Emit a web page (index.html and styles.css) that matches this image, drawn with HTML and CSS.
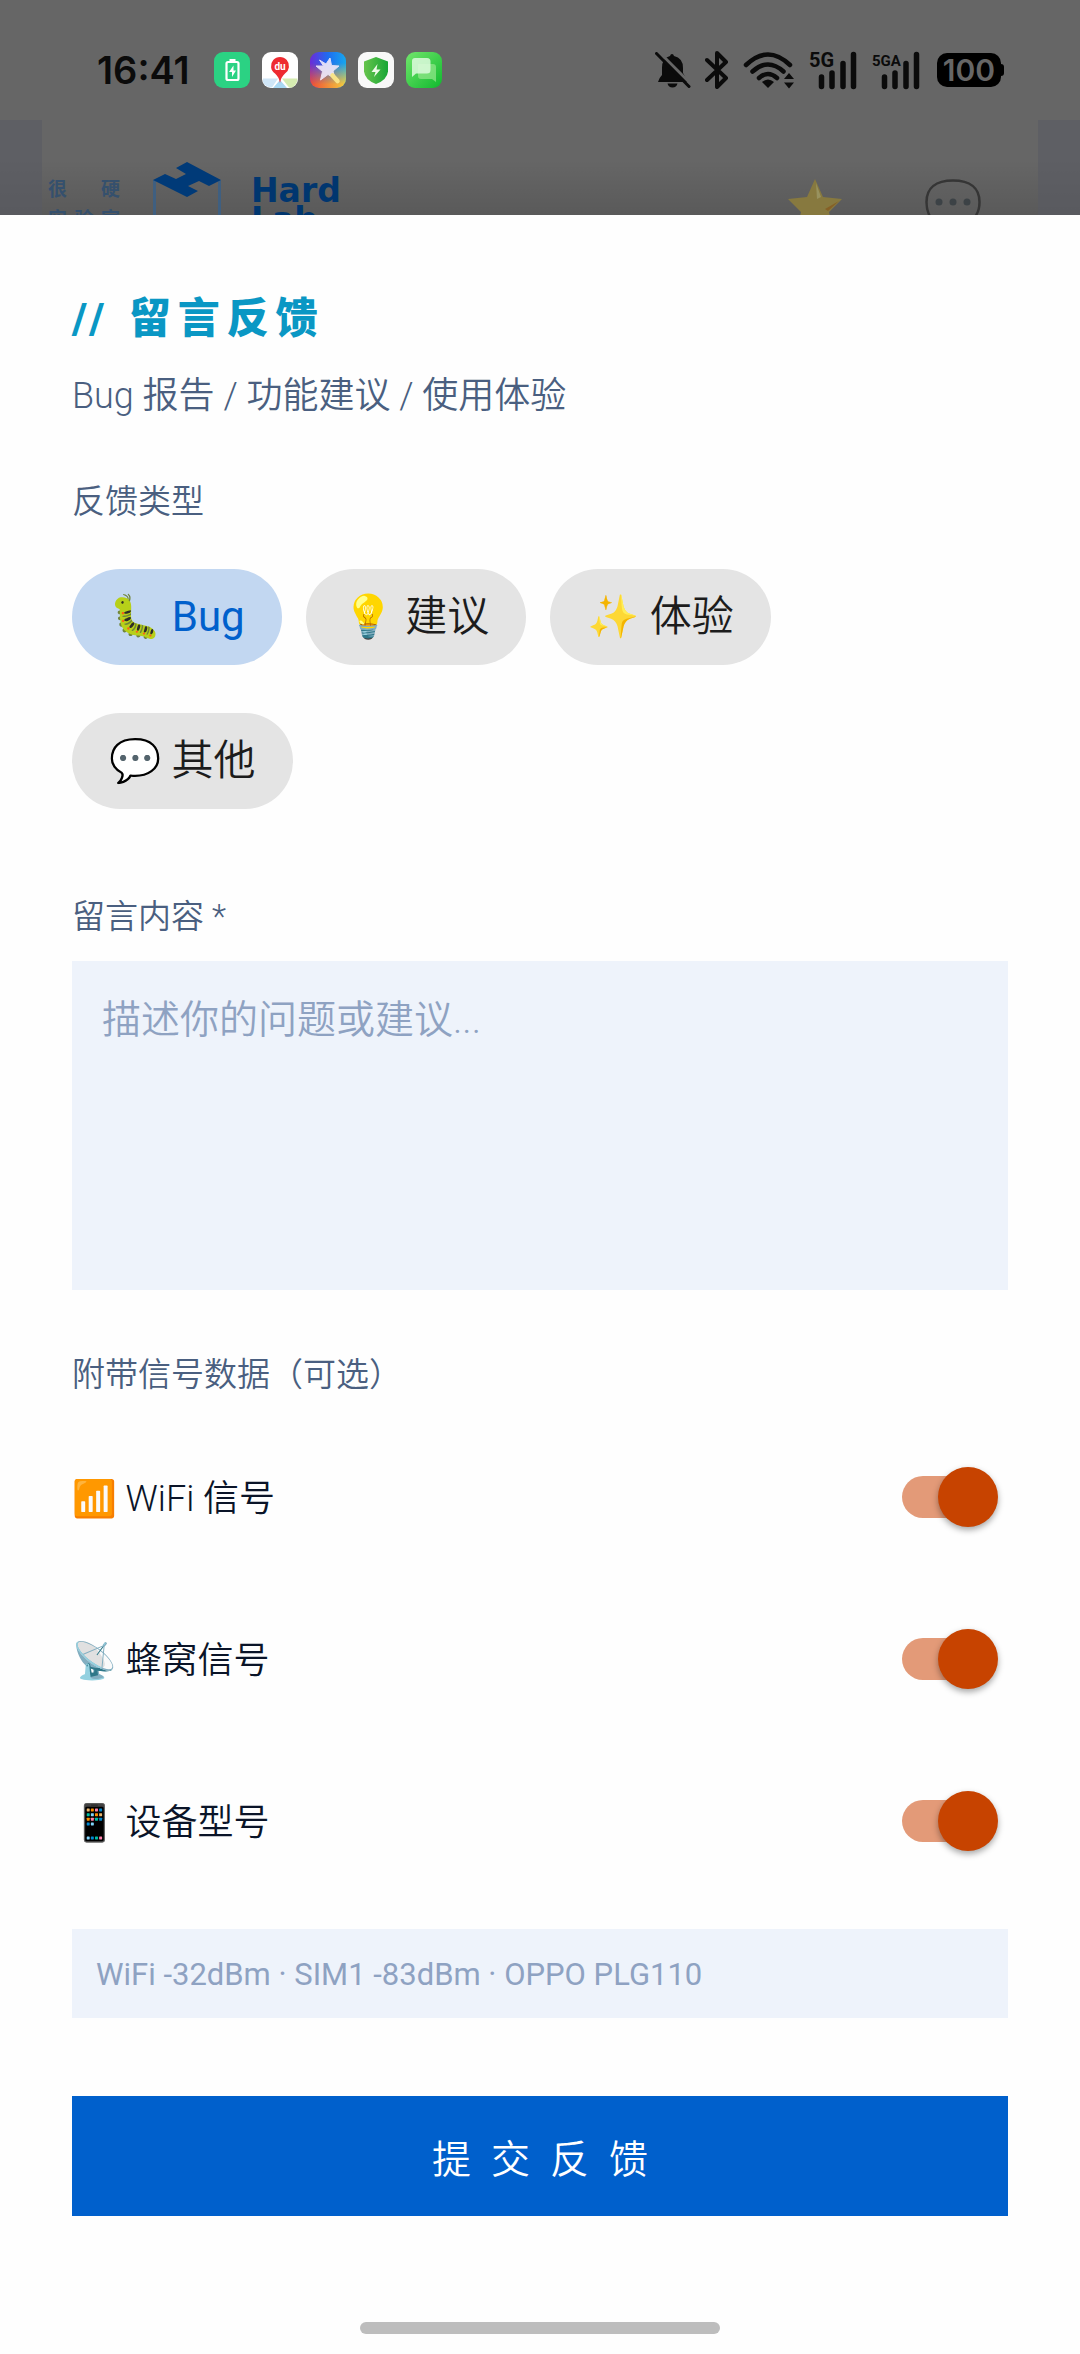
FILE: index.html
```html
<!DOCTYPE html>
<html lang="zh-CN">
<head>
<meta charset="utf-8">
<meta name="viewport" content="width=device-width, initial-scale=1">
<title>留言反馈</title>
<link rel="stylesheet" href="styles.css">
</head>
<body>
<div class="screen">
  <div class="backdrop">
    <div class="status">
      <div class="status-left">
        <span class="clock">16:41</span>
        <svg class="app" viewBox="0 0 36 36"><rect width="36" height="36" rx="9" fill="#2bd283"/><rect x="12.5" y="10" width="12" height="18" rx="1.5" fill="none" stroke="#fff" stroke-width="2.2"/><rect x="15.500" y="7" width="6" height="3" fill="#fff"/><path d="M19.500 13.500l-4.500 6.500h3v5l4-6.500h-2.500z" fill="#fff"/></svg>
        <svg class="app" viewBox="0 0 36 36"><rect width="36" height="36" rx="9" fill="#fff"/><path d="M1 26.500h15L10 35.500Q3 35 1 30z" fill="#cfe6f7"/><path d="M18 28l-7 8h14z" fill="#a9d8f3"/><path d="M20 26.500h15.500Q35 33 30 35.500h-3z" fill="#d5ebb0"/><path d="M18 31q-1-6-5-9.500a9 9 0 1 1 10 0Q19 25 18 31z" fill="#ee2b31"/><text x="18" y="18" text-anchor="middle" class="pin-text">du</text></svg>
        <svg class="app" viewBox="0 0 36 36"><defs><linearGradient id="sky" x1="0" y1="0" x2="1" y2="0"><stop offset="0" stop-color="#6b2bd8"/><stop offset=".5" stop-color="#1f6df0"/><stop offset="1" stop-color="#16a7ee"/></linearGradient><linearGradient id="sun" x1="0" y1="1" x2="1" y2=".9"><stop offset="0" stop-color="#ec4a36"/><stop offset="1" stop-color="#f3cf3e"/></linearGradient><linearGradient id="fade" x1="0" y1="0" x2="0" y2="1"><stop offset=".3" stop-color="#000"/><stop offset=".9" stop-color="#fff"/></linearGradient><mask id="low"><rect width="36" height="36" fill="url(#fade)"/></mask></defs><rect width="36" height="36" rx="9" fill="url(#sky)"/><rect width="36" height="36" rx="9" fill="url(#sun)" mask="url(#low)"/><path d="M20 6l1.500 7.500 7.500.5-6 5 2 7.500-7-4-7.500 5.500 2-8.500L6 14h7.500l-4-6 6.500 4z" fill="#f1e9fa" stroke="#f1e9fa" stroke-linejoin="round" opacity=".9"/><path d="M22.500 23.500l5 5.500" stroke="#f8e489" stroke-width="4.500" stroke-linecap="round"/></svg>
        <svg class="app" viewBox="0 0 36 36"><defs><linearGradient id="shield"><stop offset="0" stop-color="#67c44c"/><stop offset="1" stop-color="#17a635"/></linearGradient></defs><rect width="36" height="36" rx="9" fill="#f8f8f8"/><path d="M18 5l12 4.500v10Q29 28 18 32 7 28 6 19.500v-10z" fill="url(#shield)"/><path d="M19.500 12l-6 8h4l-1.500 5 6.500-7.500h-4z" fill="#eefbe8"/></svg>
        <svg class="app" viewBox="0 0 36 36"><defs><linearGradient id="chat" x1="0" y1="0" x2="1" y2="1"><stop offset="0" stop-color="#72e66c"/><stop offset="1" stop-color="#10b92e"/></linearGradient></defs><rect width="36" height="36" rx="9" fill="url(#chat)"/><path d="M12 12h15q3 0 3 3v15l-4-3H15q-3 0-3-3z" fill="#8fe588" opacity=".75"/><path d="M9 6h12q3.500 0 3.500 3.500v8.500q0 3.500-3.500 3.500H10l-4 3.500V9q0-3 3-3z" fill="#defade" opacity=".85"/></svg>
      </div>
      <div class="status-right">
        <svg class="bell" viewBox="0 0 36 36"><path d="M17 2q1.500 0 2 2 9 2 9 12v5l5 9H3q1-4 4-7v-7q0-10 8-12 .5-2 2-2z" fill="#0b0b0b"/><path d="M12.500 31.500h10q-1 4-5 4t-5-4z" fill="#0b0b0b"/><path d="M3-1L37 33" stroke="#666" stroke-width="3"/><path d="M1.500 1.500L34 34.500" stroke="#0b0b0b" stroke-width="3" stroke-linecap="round"/></svg>
        <svg class="bt" viewBox="0 0 24 38"><path d="M2 9l19 18-9 9V2l9 9L2 29" fill="none" stroke="#0b0b0b" stroke-width="4" stroke-linejoin="round" stroke-linecap="round"/></svg>
        <svg class="wifi" viewBox="0 0 52 38"><g fill="none" stroke="#0b0b0b" stroke-width="4.500" stroke-linecap="round"><path d="M3 14q22-21 44 0"/><path d="M9.500 20.500q15.500-14 31 0"/><path d="M16 27q9-8 18 0"/></g><path d="M19 31q6-5 12 0l-6 6z" fill="#0b0b0b"/><path d="M41 28l5-6 5 6zM41 31.500l5 6 5-6z" fill="#0b0b0b"/></svg>
        <svg class="signal" viewBox="0 0 49 38"><text x="0" y="16" class="net">5G</text><path d="M12.500 26v9.500M23 22v13.500M34 12.500v23M44.500 3.500v32" stroke="#0b0b0b" stroke-width="5.500" stroke-linecap="round"/></svg>
        <svg class="signal" viewBox="0 0 49 38"><text x="0" y="15" class="net net-small">5GA</text><path d="M12.500 26v9.500M23 22v13.500M34 12.500v23M44.500 3.500v32" stroke="#0b0b0b" stroke-width="5.500" stroke-linecap="round"/></svg>
        <span class="battery">100</span>
      </div>
    </div>
    <div class="app-header">
      <div class="brand">
        <div class="brand-cn"><div><span>很</span><span>硬</span></div><div><span>实</span><span>验</span><span>室</span></div></div>
        <svg class="cube" viewBox="0 0 68 80"><path d="M1.500 18v60M66.500 18v60" stroke="#3f5f80" stroke-width="3"/><path d="M34 0L68 18 56 24 46 19 35 24 45 29 34 35 0 18 12 12 23 17 33 12 23 6z" fill="#003a78"/></svg>
        <div class="brand-en">Hard<br>Lab</div>
      </div>
      <div class="header-actions">
        <svg class="star" viewBox="0 0 54 52"><path d="M27 0l8 18 19 2-13 13 4 19-18-9-18 9 4-19L0 20l19-2z" fill="#87793f"/><path d="M28 4l5 14-4 2z" fill="#98925f"/><path d="M37 30l14-8-11 10z" fill="#866025"/></svg>
        <svg class="bubble" viewBox="0 0 56 56"><path d="M28 1.500C11 1.500 1.500 9 1.500 23S9 44 14 45q0 5-4 9 8-2 12-8h6c18 0 26.500-9 26.500-23S45 1.500 28 1.500z" fill="none" stroke="#353535" stroke-width="2.500"/><g fill="#3c4246"><circle cx="14" cy="23" r="3.500"/><circle cx="28" cy="23" r="3.500"/><circle cx="42" cy="23" r="3.500"/></g></svg>
      </div>
    </div>
  </div>

  <form class="sheet">
    <h1>// 留言反馈</h1>
    <p class="subtitle">Bug 报告 / 功能建议 / 使用体验</p>

    <fieldset class="types">
      <legend class="label">反馈类型</legend>
      <div class="chips">
        <label class="chip"><input type="radio" name="type" checked>🐛 Bug</label>
        <label class="chip"><input type="radio" name="type">💡 建议</label>
        <label class="chip"><input type="radio" name="type">✨ 体验</label>
        <label class="chip"><input type="radio" name="type">💬 其他</label>
      </div>
    </fieldset>

    <label class="label message-label" for="message">留言内容 *</label>
    <textarea id="message" placeholder="描述你的问题或建议..."></textarea>

    <fieldset class="signals">
      <legend class="label">附带信号数据（可选）</legend>
      <div class="rows">
        <label class="row"><span>📶 WiFi 信号</span><input type="checkbox" class="switch" checked></label>
        <label class="row"><span>📡 蜂窝信号</span><input type="checkbox" class="switch" checked></label>
        <label class="row"><span>📱 设备型号</span><input type="checkbox" class="switch" checked></label>
      </div>
    </fieldset>

    <p class="summary">WiFi -32dBm · SIM1 -83dBm · OPPO PLG110</p>
    <button type="button" class="submit">提交反馈</button>
    <div class="home-bar"></div>
  </form>
</div>
</body>
</html>
```
FILE: styles.css
```css
* { box-sizing: border-box; }

body {
  margin: 0;
  background: #fefefe;
  color: #0a1428;
  font-family: Roboto, "Noto Sans CJK SC", "Noto Color Emoji", sans-serif;
  font-weight: 350;
}

h1, p, fieldset, legend { margin: 0; padding: 0; border: 0; }

.screen {
  min-height: 100vh;
  display: flex;
  flex-direction: column;
}

/* Dimmed app behind the sheet */
.backdrop {
  height: 215px;
  overflow: hidden;
  background: linear-gradient(transparent 160px, rgba(0, 0, 0, .12)) #666;
}

.status {
  height: 120px;
  padding: 20px 79px 0 97px;
  display: flex;
  align-items: center;
  justify-content: space-between;
}

.status-left { display: flex; align-items: center; gap: 12px; }

.clock {
  margin-right: 12px;
  color: #0b0b0b;
  font: 600 38px/44px Inter, sans-serif;
}

.app { width: 36px; height: 36px; }
.pin-text { font: 700 10px Roboto, sans-serif; fill: #fff; }

.status-right { display: flex; align-items: center; gap: 14px; }
.bell { width: 36px; height: 36px; }
.bt { width: 24px; height: 38px; }
.wifi { width: 52px; height: 38px; }
.signal { width: 49px; height: 38px; overflow: visible; }
.net { font: 700 20px Roboto, sans-serif; fill: #0b0b0b; }
.net-small { font-size: 15px; }

.battery {
  position: relative;
  width: 64px;
  margin-left: 2px;
  border-radius: 10px;
  background: #000;
  color: #666;
  font: 600 30px/34px Inter, sans-serif;
  text-align: center;
}

.battery::after {
  content: "";
  position: absolute;
  left: 100%;
  top: 11px;
  width: 3px;
  height: 12px;
  border-radius: 0 3px 3px 0;
  background: #000;
}

.app-header {
  height: 160px;
  padding: 42px 57px 0 6px;
  border: solid rgba(88, 90, 98, .6);
  border-width: 0 42px;
  display: flex;
  align-items: flex-start;
  justify-content: space-between;
}

.brand { display: flex; align-items: flex-start; }

.brand-cn {
  width: 72px;
  margin: 11px 33px 0 0;
  color: #35506d;
  font: 700 19px/30px "Noto Sans CJK SC", sans-serif;
}

.brand-cn div { display: flex; justify-content: space-between; }
.cube { width: 68px; height: 80px; margin-right: 30px; }

.brand-en {
  margin-top: 14px;
  color: #00366f;
  font: 700 33px/29px "DejaVu Sans", sans-serif;
}

.header-actions { display: flex; gap: 83px; padding-top: 17px; }
.star { width: 54px; height: 52px; }
.bubble { width: 56px; height: 56px; }

/* Feedback sheet */
.sheet {
  flex: 1;
  padding: 80px 72px 20px;
  display: flex;
  flex-direction: column;
  background: #fefefe;
}

h1 {
  color: #0a97c4;
  font-size: 42px;
  font-weight: 800;
  line-height: 48px;
  letter-spacing: 7px;
}

.subtitle {
  margin-top: 29px;
  color: #4a5f80;
  font-size: 36px;
  line-height: 48px;
}

.label {
  display: block;
  color: #4a5f80;
  font-size: 33px;
  line-height: 48px;
}

.types { margin-top: 58px; }
.chips { margin-top: 43px; display: flex; flex-wrap: wrap; gap: 48px 24px; max-width: 840px; }

.chip {
  position: relative;
  padding: 0 37px;
  border-radius: 48px;
  background: #e4e4e4;
  color: #1c1c1c;
  font-size: 42px;
  line-height: 96px;
  white-space: nowrap;
}

.chip input { position: absolute; opacity: 0; }
.chip:has(:checked) { background: #c2d7f1; color: #0060cc; font-weight: 400; }

.message-label { margin-top: 84px; }

textarea {
  width: 100%;
  height: 329px;
  margin-top: 20px;
  padding: 30px;
  border: 0;
  background: #eef3fb;
  color: #0a1428;
  font: inherit;
  font-size: 39px;
  line-height: 58px;
  resize: none;
}

textarea::placeholder { color: #8ea2c2; opacity: 1; }

.signals { margin-top: 61px; }
.rows { margin-top: 17px; }

.row {
  min-height: 162px;
  display: flex;
  align-items: center;
  justify-content: space-between;
  font-size: 36px;
  line-height: 48px;
}

.row span { padding-top: 4px; }

.switch {
  appearance: none;
  position: relative;
  width: 84px;
  height: 42px;
  margin: 0 22px 0 0;
  border-radius: 21px;
  background: #e39a78;
}

.switch::before {
  content: "";
  position: absolute;
  right: -12px;
  top: -9px;
  width: 60px;
  height: 60px;
  border-radius: 50%;
  background: #c74300;
  box-shadow: 0 3px 6px rgba(0, 0, 0, .35);
}

.summary {
  margin-top: 27px;
  padding: 21px 24px 19px;
  background: #eef3fb;
  color: #8ea2c2;
  font-size: 31px;
  font-weight: 400;
  line-height: 49px;
}

.submit {
  height: 120px;
  margin-top: 78px;
  padding: 0 0 0 20px;
  border: 0;
  background: #0060cc;
  color: #fff;
  font: inherit;
  font-size: 39px;
  letter-spacing: 20px;
}

.home-bar {
  width: 360px;
  height: 12px;
  margin: 106px auto 0;
  border-radius: 6px;
  background: #bdbdbd;
}
```
